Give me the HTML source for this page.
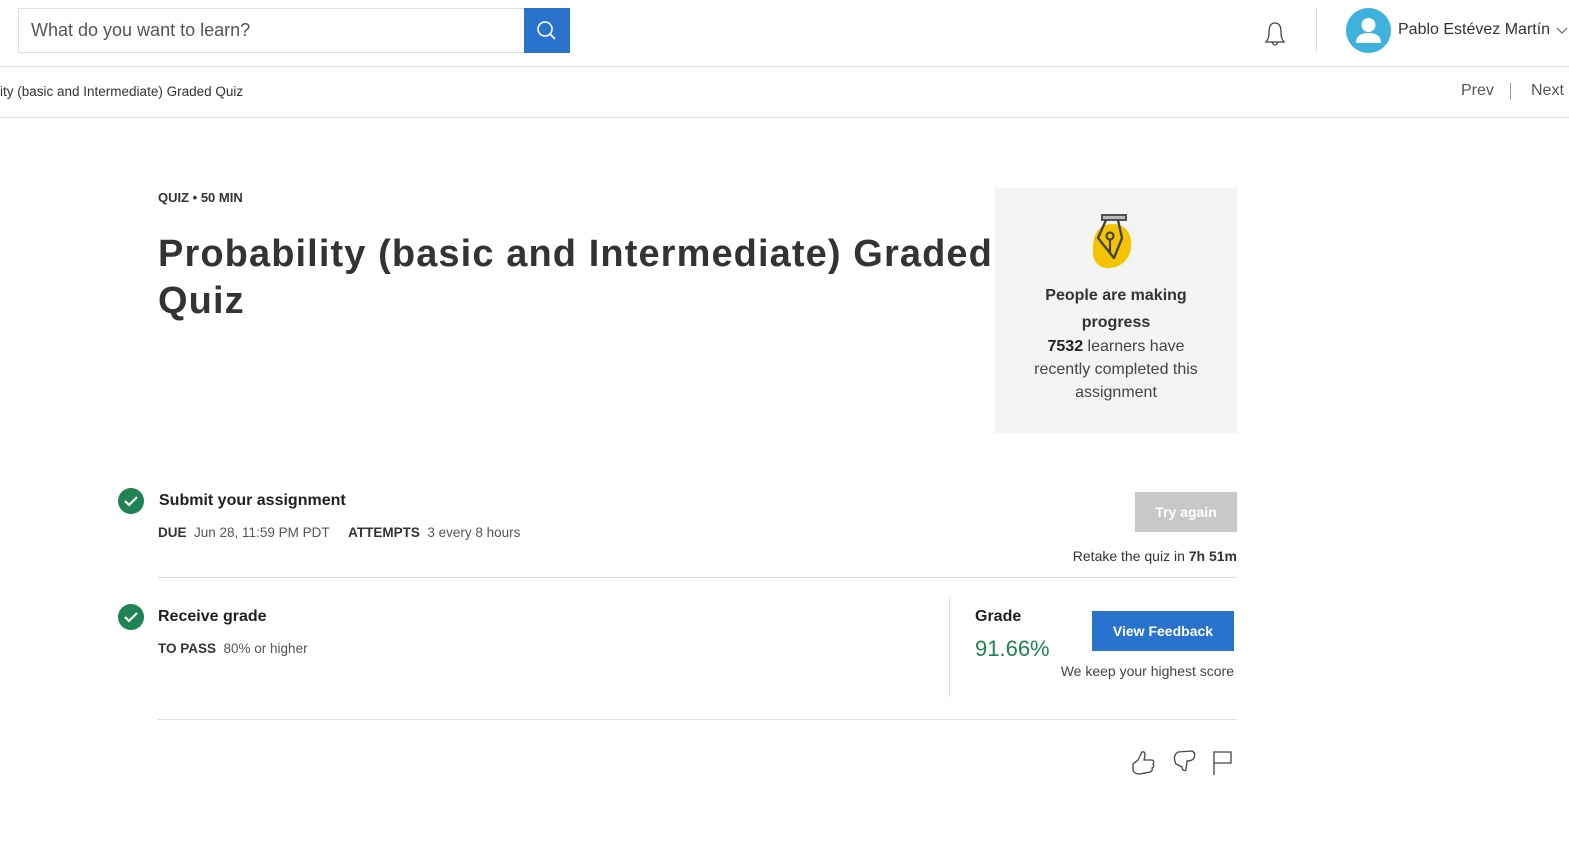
<!DOCTYPE html>
<html><head><meta charset="utf-8"><style>
*{box-sizing:border-box;margin:0;padding:0}
body{width:1569px;height:861px;background:#fff;font-family:"Liberation Sans",sans-serif;color:#1f1f1f;position:relative;overflow:hidden}
.abs{position:absolute}
.b{font-weight:bold}
</style></head><body>
<div class="abs" style="left:18px;top:8px;width:507px;height:45px;border:1px solid #ddd;border-right:none;font-size:18px;color:#555;padding:11px 12px">What do you want to learn?</div>
<div class="abs" style="left:524px;top:8px;width:46px;height:45px;background:#2a73cc">
<svg width="46" height="45"><circle cx="21" cy="21" r="7" stroke="#fff" stroke-width="1.6" fill="none"/><line x1="26" y1="26" x2="31" y2="31" stroke="#fff" stroke-width="1.8"/></svg></div>
<svg class="abs" style="left:1260px;top:18px" width="30" height="32"><path d="M6 24 Q9 21 9 14 Q9 5 15 5 Q21 5 21 14 Q21 21 24 24 Z" fill="none" stroke="#444" stroke-width="1.3"/><path d="M12 24 Q15 30 18 24" fill="none" stroke="#444" stroke-width="1.3"/></svg>
<div class="abs" style="left:1316px;top:8px;width:1px;height:45px;background:#ddd"></div>
<svg class="abs" style="left:1346px;top:8px" width="45" height="45"><circle cx="22.5" cy="22.5" r="22.5" fill="#3eb1dc"/><circle cx="22.5" cy="17" r="7" fill="#fff"/><path d="M10 35 Q10 25 22.5 25 Q35 25 35 35 Z" fill="#fff"/></svg>
<div class="abs" style="left:1398px;top:21px;font-size:16px;color:#333">Pablo Estévez Martín</div>
<svg class="abs" style="left:1556px;top:26px" width="12" height="10"><path d="M1 2 L6 7 L11 2" fill="none" stroke="#666" stroke-width="1.2"/></svg>
<div class="abs" style="left:0;top:66px;width:1569px;height:1px;background:#ddd"></div>
<div class="abs" style="left:0;top:84px;font-size:13.5px;color:#333">ity (basic and Intermediate) Graded Quiz</div>
<div class="abs" style="left:1461px;top:82px;font-size:16px;color:#555">Prev</div>
<div class="abs" style="left:1510px;top:83px;width:1px;height:17px;background:#999"></div>
<div class="abs" style="left:1531px;top:82px;font-size:16px;color:#555">Next</div>
<div class="abs" style="left:0;top:117px;width:1569px;height:1px;background:#ddd"></div>

<div class="abs b" style="left:158px;top:190px;font-size:13px;color:#333">QUIZ • 50 MIN</div>
<div class="abs b" style="left:158px;top:231px;font-size:38px;line-height:47px;color:#333;width:860px;letter-spacing:1.1px">Probability (basic and Intermediate) Graded Quiz</div>

<div class="abs" style="left:995px;top:188px;width:242px;height:245px;background:#f4f4f4;text-align:center">
<svg style="position:absolute;left:93px;top:24px" width="55" height="60"><path d="M5 34 Q6 14 22 12 Q40 11 43 28 Q45 48 28 55 Q10 60 5 44 Z" fill="#f5c400"/><rect x="14" y="3" width="24" height="5" fill="#bbb" stroke="#444" stroke-width="1.8"/><path d="M18 8 L10 26 L26 46 L34 26 L30 8" fill="none" stroke="#444" stroke-width="2.4" stroke-linejoin="round"/><circle cx="22" cy="24" r="3.5" fill="none" stroke="#444" stroke-width="2.2"/><line x1="22" y1="28" x2="22" y2="40" stroke="#444" stroke-width="2.2"/></svg>
<div class="b" style="position:absolute;top:94px;width:242px;font-size:16px;line-height:27px;color:#333">People are making<br>progress</div>
<div style="position:absolute;top:147px;width:242px;font-size:16px;line-height:23px;color:#444"><b style="color:#222">7532</b> learners have<br>recently completed this<br>assignment</div>
</div>

<svg class="abs" style="left:118px;top:488px" width="26" height="26"><circle cx="13" cy="13" r="13" fill="#1f8354"/><path d="M7 13 L11 17 L19 9" fill="none" stroke="#fff" stroke-width="2.2"/></svg>
<div class="abs b" style="left:159px;top:492px;font-size:16px">Submit your assignment</div>
<div class="abs" style="left:158px;top:525px;font-size:13.5px;color:#555"><b style="color:#333">DUE</b>&nbsp; Jun 28, 11:59 PM PDT &nbsp;&nbsp;&nbsp; <b style="color:#333">ATTEMPTS</b>&nbsp; 3 every 8 hours</div>
<div class="abs b" style="left:1135px;top:492px;width:102px;height:40px;background:#c8c8c8;color:#fff;font-size:14px;text-align:center;line-height:40px">Try again</div>
<div class="abs" style="left:1040px;top:548px;width:197px;text-align:right;font-size:14px;color:#333">Retake the quiz in <b>7h 51m</b></div>
<div class="abs" style="left:158px;top:577px;width:1079px;height:1px;background:#ddd"></div>

<svg class="abs" style="left:118px;top:604px" width="26" height="26"><circle cx="13" cy="13" r="13" fill="#1f8354"/><path d="M7 13 L11 17 L19 9" fill="none" stroke="#fff" stroke-width="2.2"/></svg>
<div class="abs b" style="left:158px;top:608px;font-size:16px">Receive grade</div>
<div class="abs" style="left:158px;top:641px;font-size:13.5px;color:#555"><b style="color:#333">TO PASS</b>&nbsp; 80% or higher</div>
<div class="abs" style="left:949px;top:598px;width:1px;height:99px;background:#ddd"></div>
<div class="abs b" style="left:975px;top:608px;font-size:16px">Grade</div>
<div class="abs" style="left:975px;top:636px;font-size:22px;color:#1f8354">91.66%</div>
<div class="abs b" style="left:1092px;top:611px;width:142px;height:40px;background:#2a73cc;color:#fff;font-size:14px;text-align:center;line-height:40px">View Feedback</div>
<div class="abs" style="left:1030px;top:663px;width:204px;text-align:right;font-size:14px;color:#444">We keep your highest score</div>
<div class="abs" style="left:158px;top:719px;width:1079px;height:1px;background:#ddd"></div>

<svg class="abs" style="left:1130px;top:748px" width="110" height="30"><g fill="none" stroke="#444" stroke-width="1.3"><path d="M3 16 L8 12 L12 4 Q15 3 15 7 L14 12 L22 12 Q25 13 23 16 Q25 18 22 20 Q23 23 20 24 L10 26 Q4 26 3 22 Z"/><path d="M46 16 Q42 8 48 4 L62 3 Q66 5 64 10 Q62 13 57 13 L56 22 Q53 24 52 19 Z"/><path d="M84 27 L84 4 L101 4 L101 15 L84 15"/></g></svg>
</body></html>
